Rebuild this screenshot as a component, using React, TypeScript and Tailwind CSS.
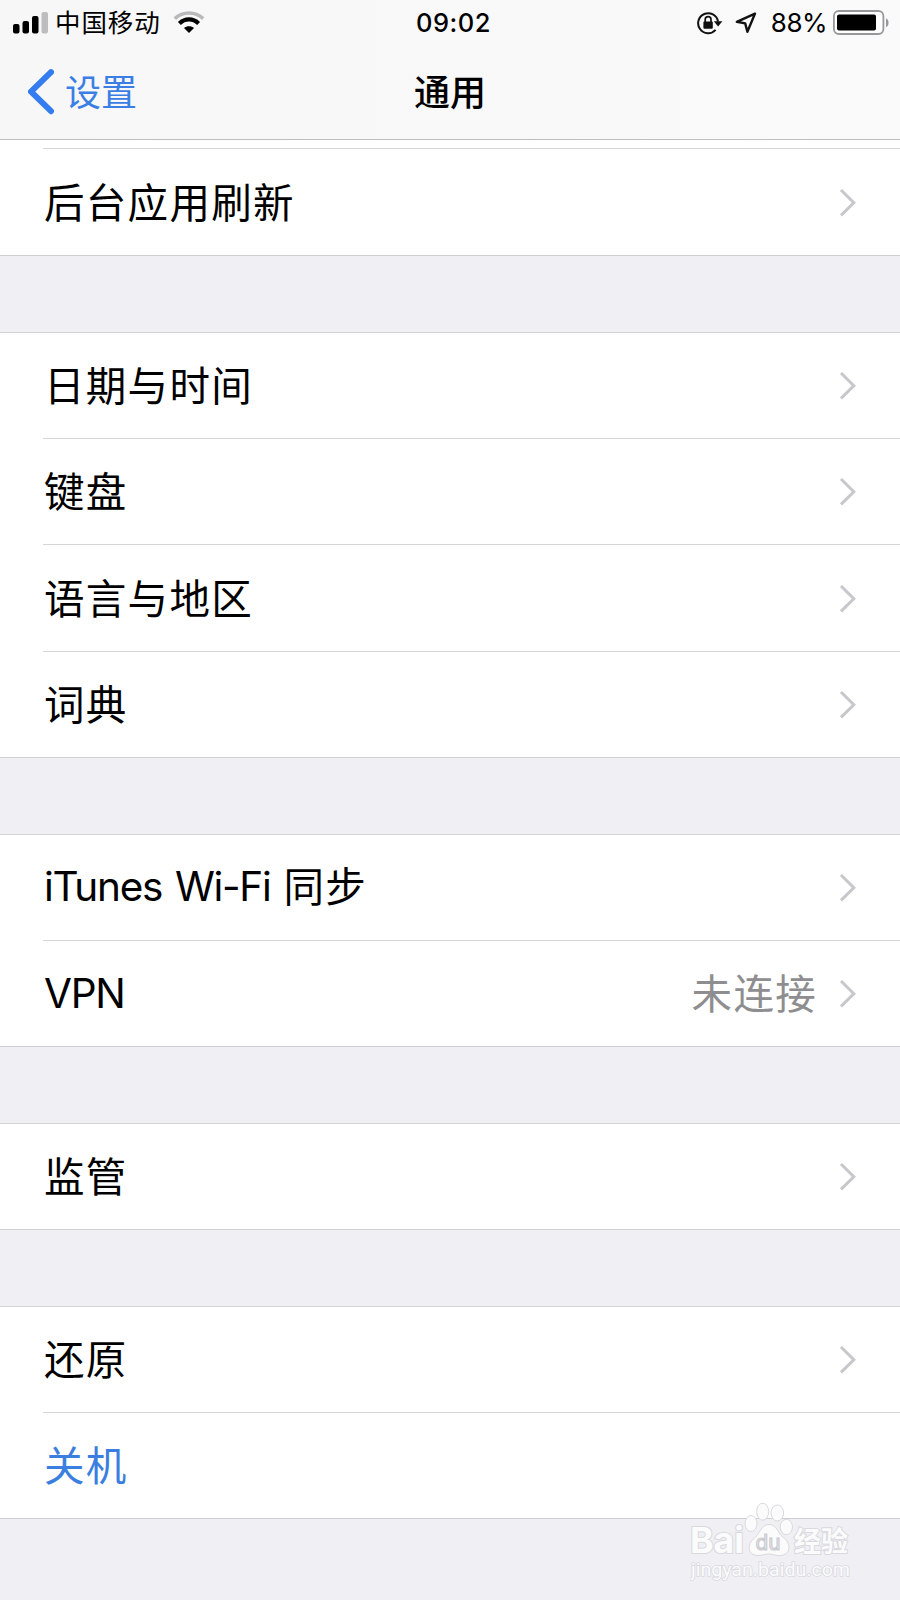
import clsx from "clsx";

interface Item {
  title: string;
  value?: string;
  action?: boolean;
  tall?: boolean;
}

const groups: Item[][] = [
  [
    { title: "日期与时间" },
    { title: "键盘" },
    { title: "语言与地区", tall: true },
    { title: "词典" },
  ],
  [{ title: "iTunes Wi-Fi 同步" }, { title: "VPN", value: "未连接" }],
  [{ title: "监管" }],
  [{ title: "还原" }, { title: "关机", action: true }],
];

function Chevron() {
  return (
    <svg width="18" height="30" viewBox="0 0 18 30" fill="none" className="shrink-0">
      <path d="M2 2L14.8 14.7L2 27.4" stroke="#c7c7cc" strokeWidth="3" />
    </svg>
  );
}

// splits latin words from chinese ones, they need a different tracking
function Label({ text }: { text: string }) {
  const parts = text.split(/([\u4e00-\u9fff]+)/).filter(Boolean);
  const latin = /[a-z]/i.test(text);
  return (
    <div className={clsx("whitespace-pre", !latin && "pt-[3px]")}>
      {parts.map(part => (
        <span
          key={part}
          className={
            /[a-z]/i.test(part)
              ? "text-[40.5px] tracking-[-1.3px] [word-spacing:2.8px]"
              : clsx("text-[40.5px] tracking-[1.3px]", latin && "align-[-1px]")
          }
        >
          {part}
        </span>
      ))}
    </div>
  );
}

function Row({ item, last }: { item: Item; last: boolean }) {
  return (
    <div className={clsx("relative flex items-center pl-[44px] pr-[43px]", item.tall ? "h-[107px]" : "h-[106px]")}>
      <div className={clsx("flex-grow", item.action ? "text-[#3a7fe0]" : "text-black")}>
        <Label text={item.title} />
      </div>
      {item.value && (
        <span className="mr-[22px] pt-[3px] text-[40.5px] tracking-[1.3px] text-[#8e8e90]">{item.value}</span>
      )}
      {!item.action && <Chevron />}
      <div className={clsx("absolute bottom-0 right-0 h-px", last ? "left-0 bg-[#cfced3]" : "left-[43px] bg-[#d6d6d8]")} />
    </div>
  );
}

function StatusBar() {
  return (
    <div className="grid h-[45px] grid-cols-[1fr_auto_1fr] items-center">
      <div className="flex items-center pl-[13px]">
        <svg width="36" height="24" viewBox="0 0 36 24">
          <rect x="0" y="13" width="6.5" height="9.5" rx="2" />
          <rect x="9.5" y="10" width="6.5" height="12.5" rx="2" />
          <rect x="19" y="5" width="6.5" height="17.5" rx="2" />
          <rect x="28.5" y="1" width="6.5" height="21.5" rx="2" fill="#bdbdbf" />
        </svg>
        <span className="ml-[6px] pt-[1px] text-[25.5px] tracking-[0.9px]">中国移动</span>
        <svg width="32" height="24" viewBox="0 0 32 24" fill="none" className="ml-[12px]">
          <path d="M1.8 7.6C9.8 0.2 22.2 0.2 30.2 7.6" stroke="#b9b9bb" strokeWidth="3.6" />
          <path d="M6.4 12.4C12 7 20 7 25.6 12.4" stroke="#000" strokeWidth="4.2" />
          <path d="M16 22L11 17C13.6 14.5 18.4 14.5 21 17Z" fill="#000" />
        </svg>
      </div>
      <span className="pl-[7px] pt-[1px] text-[25.5px] font-medium tracking-[0.5px]">09:02</span>
      <div className="flex items-center justify-end pr-[10px]">
        <svg width="26" height="24" viewBox="0 0 26 24" fill="none">
          <path d="M18.6 18.9A10 10 0 1 1 21 10.5" stroke="#111" strokeWidth="2" />
          <path d="M16.8 10.3H25.4L21.1 15.6Z" fill="#111" />
          <rect x="6.4" y="10.6" width="9.4" height="7.2" rx="1" fill="#111" />
          <path d="M8.2 11V8.6A2.9 2.9 0 0 1 14 8.6V11" stroke="#111" strokeWidth="1.7" />
        </svg>
        <svg width="22" height="22" viewBox="0 0 22 22" fill="none" className="ml-[12px]">
          <path d="M20 1.6L1.8 9.8L10.2 11.4L12.4 19.8Z" stroke="#111" strokeWidth="2.4" strokeLinejoin="round" />
        </svg>
        <span className="ml-[14px] pt-[1px] text-[26px] tracking-[-0.5px]">88%</span>
        <svg width="57" height="26" viewBox="0 0 57 26" fill="none" className="ml-[6px]">
          <rect x="0.9" y="1" width="49.5" height="23" rx="5" fill="#fff" stroke="#98989a" strokeWidth="1.8" />
          <rect x="4" y="4.5" width="39" height="16" rx="2" fill="#000" />
          <path d="M53 8.5C56.4 9.5 56.4 16 53 17Z" fill="#98989a" />
        </svg>
      </div>
    </div>
  );
}

function Watermark() {
  return (
    <svg width="164" height="90" viewBox="0 0 164 90" className="absolute right-[46px] bottom-[10px]" fill="#fbfbfc" stroke="#d9d9de" strokeWidth="1">
      <text x="0" y="53" fontSize="35.5" fontWeight="700" textLength="54" lengthAdjust="spacingAndGlyphs" strokeWidth="2" paintOrder="stroke">Bai</text>
      <ellipse cx="61" cy="23.5" rx="6" ry="8" />
      <ellipse cx="72.7" cy="11.7" rx="6" ry="8.5" />
      <ellipse cx="87.3" cy="13" rx="6.3" ry="8" />
      <ellipse cx="96.3" cy="27" rx="6.2" ry="7.7" />
      <path d="M79 24.5C71 24.5 70 34 64 38.5C57 44 57 55.5 68 55.5C73 55.5 74 54 79 54C84 54 85 56 90 55.5C101 55 101 44 94.5 38.5C88 34 87 24.5 79 24.5Z" />
      <text x="65.5" y="49.5" fontSize="21.5" textLength="25" lengthAdjust="spacingAndGlyphs" fill="#f4f4f6" stroke="#c9c9cf" strokeWidth="1.2">du</text>
      <text x="104" y="51.5" fontSize="28" fontWeight="700" textLength="54" lengthAdjust="spacingAndGlyphs" strokeWidth="2" paintOrder="stroke">经验</text>
      <text x="1" y="76" fontSize="18" textLength="159" lengthAdjust="spacingAndGlyphs" strokeWidth="1.5" paintOrder="stroke" className="font-['Roboto',sans-serif]">jingyan.baidu.com</text>
    </svg>
  );
}

export default function App() {
  return (
    <div className="relative h-[1600px] w-[900px] overflow-hidden bg-[#efeff4] font-['Inter','Noto_Sans_CJK_SC',sans-serif] leading-none text-black">
      <header className="h-[140px] border-b border-[#bebec0] bg-linear-to-r from-[#f7f7f8] to-[#fafafb]">
        <StatusBar />
        <nav className="grid h-[94px] grid-cols-[1fr_auto_1fr] items-center">
          <div className="flex items-center pl-[26px] text-[#3b7fe4]">
            <svg width="28" height="46" viewBox="0 0 28 46" fill="none">
              <path d="M25 3.2L5 22.7L25 42.2" stroke="#347df0" strokeWidth="6" strokeLinecap="round" strokeLinejoin="round" />
            </svg>
            <span className="ml-[11px] pt-[2px] text-[36px]">设置</span>
          </div>
          <h1 className="pt-[1px] text-[36px] font-medium">通用</h1>
        </nav>
      </header>

      <section className="bg-white">
        <div className="h-[8px]" />
        <div className="ml-[43px] h-px bg-[#d6d6d8]" />
        <Row item={{ title: "后台应用刷新", tall: true }} last />
      </section>

      {groups.map((group, i) => (
        <section key={i} className="mt-[76px] border-t border-[#d4d4d8] bg-white">
          {group.map((item, j) => (
            <Row key={item.title} item={item} last={j === group.length - 1} />
          ))}
        </section>
      ))}

      <Watermark />
    </div>
  );
}
